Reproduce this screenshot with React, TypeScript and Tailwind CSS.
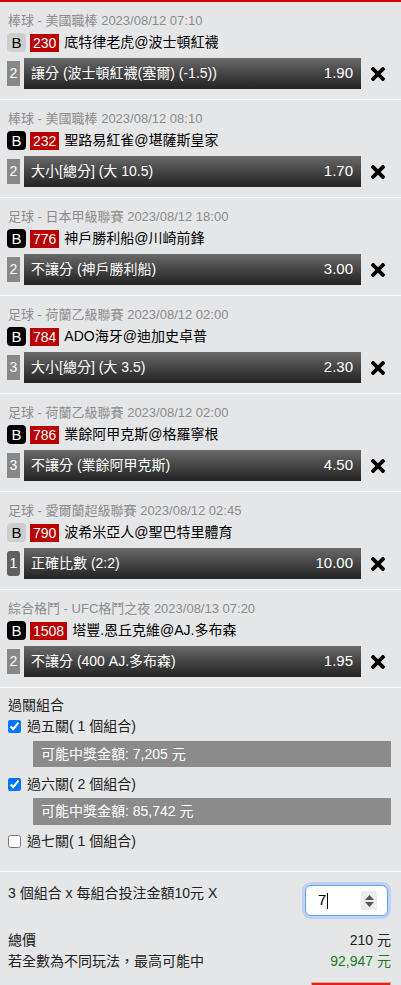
import React from 'react';

interface Bet {
  title: string;
  lightB?: boolean;
  code: string;
  teams: string;
  count: number;
  darkCount?: boolean;
  label: string;
  odds: string;
}

const bets: Bet[] = [
  { title: '棒球 - 美國職棒 2023/08/12 07:10', lightB: true, code: '230', teams: '底特律老虎@波士頓紅襪', count: 2, label: '讓分 (波士頓紅襪(塞爾) (-1.5))', odds: '1.90' },
  { title: '棒球 - 美國職棒 2023/08/12 08:10', code: '232', teams: '聖路易紅雀@堪薩斯皇家', count: 2, label: '大小[總分] (大 10.5)', odds: '1.70' },
  { title: '足球 - 日本甲級聯賽 2023/08/12 18:00', code: '776', teams: '神戶勝利船@川崎前鋒', count: 2, label: '不讓分 (神戶勝利船)', odds: '3.00' },
  { title: '足球 - 荷蘭乙級聯賽 2023/08/12 02:00', code: '784', teams: 'ADO海牙@迪加史卓普', count: 3, label: '大小[總分] (大 3.5)', odds: '2.30' },
  { title: '足球 - 荷蘭乙級聯賽 2023/08/12 02:00', code: '786', teams: '業餘阿甲克斯@格羅寧根', count: 3, label: '不讓分 (業餘阿甲克斯)', odds: '4.50' },
  { title: '足球 - 愛爾蘭超級聯賽 2023/08/12 02:45', lightB: true, code: '790', teams: '波希米亞人@聖巴特里體育', count: 1, darkCount: true, label: '正確比數 (2:2)', odds: '10.00' },
  { title: '綜合格鬥 - UFC格鬥之夜 2023/08/13 07:20', code: '1508', teams: '塔豐.恩丘克維@AJ.多布森', count: 2, label: '不讓分 (400 AJ.多布森)', odds: '1.95' },
];

// 刪除按鈕 (粗 X)
const RemoveIcon: React.FC = () => (
  <svg width="14" height="14" viewBox="0 80 352 352" className="text-black">
    <path
      fill="currentColor"
      d="M242.72 256l100.07-100.07c12.28-12.28 12.28-32.19 0-44.48l-22.24-22.24c-12.28-12.28-32.19-12.28-44.48 0L176 189.28 75.930 89.21c-12.28-12.28-32.19-12.28-44.48 0L9.21 111.45c-12.28 12.28-12.28 32.19 0 44.48L109.28 256 9.21 356.07c-12.28 12.28-12.28 32.19 0 44.48l22.24 22.24c12.28 12.28 32.2 12.28 44.48 0L176 322.72l100.07 100.07c12.28 12.28 32.2 12.28 44.48 0l22.24-22.24c12.28-12.28 12.28-32.19 0-44.48L242.72 256z"
    />
  </svg>
);

const BetItem: React.FC<{ bet: Bet }> = ({ bet }) => {
  return (
    <div className="pt-[11px] pb-[10px] border-b border-[#fafafa]">
      <div className="pl-2 text-[13px] leading-4 text-[#8c8c8c]">{bet.title}</div>
      <div className="flex items-center mt-1 pl-[7px] h-[19px]">
        <span
          className={
            bet.lightB
              ? 'w-[19px] h-[19px] rounded-[4px] bg-[#cdcdcd] text-black text-[15px] leading-[19px] text-center'
              : 'w-[19px] h-[19px] rounded-[4px] bg-black text-white text-[15px] leading-[19px] text-center'
          }
        >
          B
        </span>
        <span className="ml-1 h-[18px] px-[3px] bg-[#bb0000] text-white text-[14px] leading-[18px]">{bet.code}</span>
        <span className="ml-[5px] text-[14px] text-black leading-[19px]">{bet.teams}</span>
      </div>
      <div className="flex items-center mt-[6px] pl-[7px]">
        <span
          className={
            bet.darkCount
              ? 'w-[13px] h-[25px] rounded-[3px] bg-[#5f5f5f] text-white text-[14px] leading-[25px] text-center'
              : 'w-[13px] h-[25px] bg-[#888888] text-white text-[14px] leading-[25px] text-center'
          }
        >
          {bet.count}
        </span>
        <div className="ml-1 w-[337px] h-[31px] bg-linear-to-b from-[#6a6a6a] to-[#232323] flex items-center justify-between pl-[7px] pr-2 text-white">
          <span className="text-[14px]">{bet.label}</span>
          <span className="text-[15px]">{bet.odds}</span>
        </div>
        <div className="w-[33px] flex justify-center">
          <RemoveIcon />
        </div>
      </div>
    </div>
  );
};

const ParlayRow: React.FC<{ label: string; checked?: boolean }> = ({ label, checked }) => (
  <label className="flex items-center h-4 pl-2">
    <input type="checkbox" defaultChecked={checked} className="m-0 w-[13px] h-[13px]" />
    <span className="ml-[6px] text-[14px] leading-4 text-[#222]">{label}</span>
  </label>
);

const App: React.FC = () => {
  return (
    <div
      className="w-[401px] h-[985px] overflow-hidden bg-[#e5e6e8] border-t-2 border-[#d40000]"
      style={{ fontFamily: '"Liberation Sans", "Noto Sans CJK TC", sans-serif' }}
    >
      {bets.map((b, i) => (
        <BetItem key={i} bet={b} />
      ))}

      {/* 過關組合 */}
      <div className="pt-[9px] pb-[22px] border-b border-[#fafafa]">
        <div className="pl-2 text-[14px] leading-4 text-[#222]">過關組合</div>
        <div className="mt-[5px]">
          <ParlayRow label="過五關( 1 個組合)" checked />
        </div>
        <div className="ml-[33px] mr-[10px] mt-[7px] h-[26px] bg-[#8b8b8b] text-white text-[14px] leading-[26px] pl-2">
          可能中獎金額: 7,205 元
        </div>
        <div className="mt-[9px]">
          <ParlayRow label="過六關( 2 個組合)" checked />
        </div>
        <div className="ml-[33px] mr-[10px] mt-[6px] h-[27px] bg-[#8b8b8b] text-white text-[14px] leading-[27px] pl-2">
          可能中獎金額: 85,742 元
        </div>
        <div className="mt-[8px]">
          <ParlayRow label="過七關( 1 個組合)" />
        </div>
      </div>

      {/* 投注金額 */}
      <div className="pt-[10px] pl-2 pr-[10px] text-[14px] text-[#222]">
        <div className="flex justify-between items-start">
          <span className="mt-[3px] leading-4">3 個組合 x 每組合投注金額10元 X</span>
          <div className="mt-[3px] mr-[3px] w-[83px] h-[31px] rounded-[6px] border border-[#6f9fe6] shadow-[0_0_0_3px_#b9d3f7] bg-white flex items-center justify-between pl-3 pr-[10px]">
            <span className="text-[15px] text-black">
              7<span className="inline-block w-px h-[16px] bg-black align-middle ml-px" />
            </span>
            <div className="w-4 h-[19px] bg-[#ececec] flex flex-col items-center justify-center gap-[2px]">
              <svg width="9" height="5" viewBox="0 0 9 5">
                <path d="M0 5 L4.5 0 L9 5 Z" fill="#555" />
              </svg>
              <svg width="9" height="5" viewBox="0 0 9 5">
                <path d="M0 0 L4.5 5 L9 0 Z" fill="#555" />
              </svg>
            </div>
          </div>
        </div>
        <div className="mt-[14px] flex justify-between leading-[21px]">
          <span>總價</span>
          <span>210 元</span>
        </div>
        <div className="flex justify-between leading-[21px]">
          <span>若全數為不同玩法，最高可能中</span>
          <span className="text-[#1e7a1e]">92,947 元</span>
        </div>
        <div className="flex justify-end mt-[10px]">
          <div className="w-[80px] h-[36px] bg-[#e2231a] border border-[#f49a94]" />
        </div>
      </div>
    </div>
  );
};

export default App;
